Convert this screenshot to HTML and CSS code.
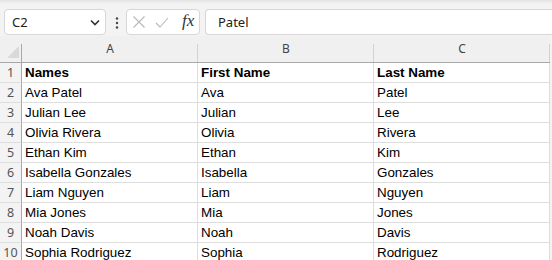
FILE: index.html
```html
<!DOCTYPE html>
<html lang="en">
<head>
    <meta charset="UTF-8">
    <meta name="viewport" content="width=device-width, initial-scale=1.0">
    <title>Names</title>
    <link rel="stylesheet" href="styles.css">
</head>
<body>
    <div class="ribbon-edge"></div>

    <div class="formula-bar">
        <div class="name-box">
            <span>C2</span>
            <svg width="10" height="7" viewBox="0 0 10 7"><path d="M1 1.5 L5 5.5 L9 1.5" fill="none" stroke="#333" stroke-width="1.6"/></svg>
        </div>
        <svg class="dots" width="4" height="12" viewBox="0 0 4 12">
            <circle cx="2" cy="1.5" r="1.2" fill="#444"/>
            <circle cx="2" cy="6" r="1.2" fill="#444"/>
            <circle cx="2" cy="10.5" r="1.2" fill="#444"/>
        </svg>
        <div class="fx-box">
            <svg width="12" height="12" viewBox="0 0 12 12"><path d="M0.5 0.5 L11.5 11.5 M11.5 0.5 L0.5 11.5" stroke="#b8b8b8" stroke-width="1.1"/></svg>
            <svg width="14" height="11" viewBox="0 0 14 11"><path d="M1 6 L5 10 L13 1" fill="none" stroke="#b8b8b8" stroke-width="1.1"/></svg>
            <span class="fx">fx</span>
        </div>
        <div class="formula-input">Patel</div>
    </div>

    <div class="sheet">
        <div class="corner"><svg width="12" height="12" viewBox="0 0 12 12"><path d="M12 0 L12 12 L0 12 Z" fill="#d9d9d9"/></svg></div>
        <div class="col-head">A</div>
        <div class="col-head">B</div>
        <div class="col-head">C</div>

        <div class="row-head">1</div><div class="cell bold">Names</div><div class="cell bold">First Name</div><div class="cell bold">Last Name</div>
        <div class="row-head">2</div><div class="cell">Ava Patel</div><div class="cell">Ava</div><div class="cell">Patel</div>
        <div class="row-head">3</div><div class="cell">Julian Lee</div><div class="cell">Julian</div><div class="cell">Lee</div>
        <div class="row-head">4</div><div class="cell">Olivia Rivera</div><div class="cell">Olivia</div><div class="cell">Rivera</div>
        <div class="row-head">5</div><div class="cell">Ethan Kim</div><div class="cell">Ethan</div><div class="cell">Kim</div>
        <div class="row-head">6</div><div class="cell">Isabella Gonzales</div><div class="cell">Isabella</div><div class="cell">Gonzales</div>
        <div class="row-head">7</div><div class="cell">Liam Nguyen</div><div class="cell">Liam</div><div class="cell">Nguyen</div>
        <div class="row-head">8</div><div class="cell">Mia Jones</div><div class="cell">Mia</div><div class="cell">Jones</div>
        <div class="row-head">9</div><div class="cell">Noah Davis</div><div class="cell">Noah</div><div class="cell">Davis</div>
        <div class="row-head">10</div><div class="cell">Sophia Rodriguez</div><div class="cell">Sophia</div><div class="cell">Rodriguez</div>
    </div>
</body>
</html>
```

FILE: styles.css
```css
body {
    margin: 0;
    background: #f3f3f3;
    font-family: 'Noto Sans', sans-serif;
    overflow: hidden;
}
.ribbon-edge {
    height: 3px;
    background: linear-gradient(#e3e3e3, #eeeeee);
}
.formula-bar {
    display: flex;
    align-items: center;
    height: 26px;
    padding: 6px 0 0 4px;
}
.name-box, .fx-box, .formula-input {
    box-sizing: border-box;
    height: 26px;
    background: #fff;
    border: 1px solid #d6d6d6;
    border-radius: 4px;
    display: flex;
    align-items: center;
}
.name-box {
    width: 102px;
    padding: 0 5px 0 7px;
    justify-content: space-between;
    font-size: 13px;
    color: #222;
}
.dots {
    margin: 1px 7px 0 9px;
}
.fx-box {
    width: 74px;
    padding: 0 0 0 6px;
}
.fx-box svg:first-child {
    margin-right: 10px;
}
.fx-box svg:nth-child(2) {
    margin-right: 13px;
    margin-top: 1px;
}
.fx {
    font-family: 'Liberation Serif', serif;
    font-style: italic;
    font-size: 17px;
    color: #333;
    margin-top: -2px;
}
.formula-input {
    flex: 1;
    margin-left: 5px;
    padding-left: 12px;
    border-right: none;
    border-radius: 4px 0 0 4px;
    font-size: 13px;
    color: #222;
}
.sheet {
    display: grid;
    grid-template-columns: 22px 176px 176px 176px;
    grid-template-rows: 27px;
    grid-auto-rows: 20px;
    margin-top: 1px;
}
.corner, .col-head {
    box-sizing: border-box;
    border-bottom: 1px solid #a9a9a9;
}
.corner {
    background: linear-gradient(#a9a9a9, #a9a9a9) right bottom / 1px 18px no-repeat, #f0f0f0;
    display: flex;
    align-items: flex-end;
    padding: 0 3px 4px 7px;
}
.col-head {
    background: linear-gradient(#d2d2d2, #d2d2d2) right bottom / 1px 18px no-repeat, #f0f0f0;
    display: flex;
    justify-content: center;
    align-items: flex-end;
    padding-bottom: 5px;
    font-size: 12px;
    color: #444;
}
.row-head {
    box-sizing: border-box;
    background: #f3f3f3;
    border-right: 1px solid #a9a9a9;
    border-bottom: 1px solid #dedede;
    display: flex;
    align-items: center;
    justify-content: center;
    font-size: 12.5px;
    color: #555;
}
.cell {
    box-sizing: border-box;
    background: #fff;
    border-right: 1px solid #dedede;
    border-bottom: 1px solid #dedede;
    padding-left: 3px;
    display: flex;
    align-items: center;
    font-family: 'Liberation Sans', Arial, sans-serif;
    font-size: 13.4px;
    color: #000;
    white-space: nowrap;
}
.bold {
    font-weight: bold;
}
```
